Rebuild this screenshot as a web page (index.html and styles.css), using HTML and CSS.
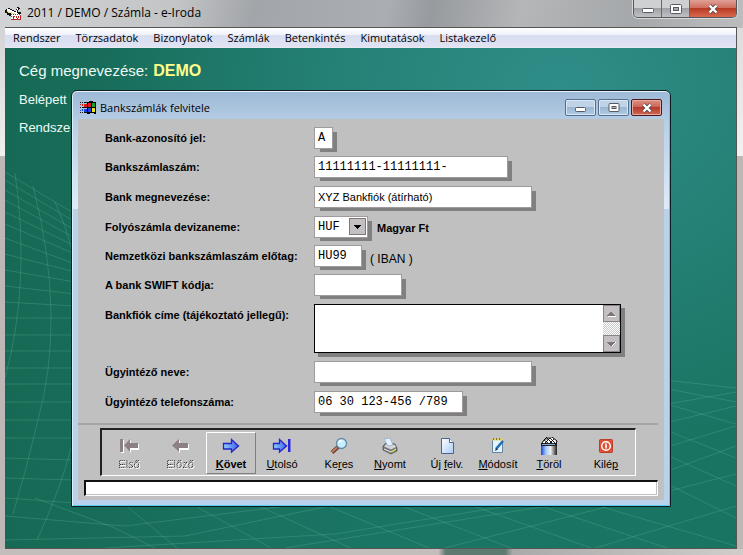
FILE: index.html
```html
<!DOCTYPE html>
<html lang="hu">
<head>
<meta charset="utf-8">
<title>2011 / DEMO / Számla - e-Iroda</title>
<link rel="stylesheet" href="styles.css">
</head>
<body>
<div class="app">
  <header class="app-title">
    <svg class="app-icon" viewBox="0 0 17 16" width="17" height="16" shape-rendering="crispEdges" aria-hidden="true">
      <path d="M1 4h2V3h2v1h2v1h2v1h2V4h1V2h2v1h1v1h-1v1h-1v2h3v8H6v-4H4v-1H2V8H0V5h1z" fill="#111"/>
      <path d="M2 4h3v1h2v1h2v1h2V5h1V3h1v2h-1v3h1v1H7V8H4V7H2z" fill="#fff"/>
      <path d="M2 6h2v1h3v1h3v1H6V8H3z" fill="#eedc9a"/>
      <path d="M6 9h10v6H6z" fill="#fff"/>
      <path d="M6 9h1v1H6zM8 9h1v1H8zM10 9h1v1h-1zM12 9h1v1h-1zM14 9h1v1h-1zM6 14h10v1H6zM6 11h1v1H6zM15 10h1v4h-1zM8 11h2v1H8zM8 12h1v2H8zM11 11h1v2h-1zM13 11h1v2h-1zM12 13h1v1h-1z" fill="#b22"/>
    </svg>
    <h1 class="app-name">2011 / DEMO / Számla - e-Iroda</h1>
    <div class="app-buttons">
      <button class="app-btn" type="button" aria-label="Kis méret"><svg viewBox="0 0 12 10" width="12" height="10"><rect x=".5" y="4.500" width="11" height="4" rx="1" fill="#fff" stroke="#545a66"/></svg></button>
      <button class="app-btn" type="button" aria-label="Teljes méret"><svg viewBox="0 0 12 10" width="12" height="10"><rect x=".5" y=".5" width="11" height="9" rx="1" fill="#fff" stroke="#545a66"/><rect x="3.500" y="3.500" width="5" height="3" fill="#aaa" stroke="#545a66"/></svg></button>
      <button class="app-btn app-btn-close" type="button" aria-label="Bezárás"><svg viewBox="0 0 12 10" width="12" height="10"><path d="M2.500 1.500l7 7M9.500 1.500l-7 7" stroke="#5a4a50" stroke-width="4"/><path d="M2.500 1.500l7 7M9.500 1.500l-7 7" stroke="#fff" stroke-width="2.400"/></svg></button>
    </div>
  </header>
  <div class="app-body">
    <nav class="menu">
      <a href="#">Rendszer</a><a href="#">Törzsadatok</a><a href="#">Bizonylatok</a><a href="#">Számlák</a><a href="#">Betenkintés</a><a href="#">Kimutatások</a><a href="#">Listakezelő</a>
    </nav>
    <main class="desktop">
      <svg class="wallpaper" viewBox="0 0 731 500" preserveAspectRatio="none" aria-hidden="true">
        <g fill="none" stroke="#5fae97" stroke-opacity=".32">
          <path d="M10 125Q26 235 0 330M28 138Q62 270 32 376Q22 420 8 466M50 154Q95 250 66 400Q56 440 32 492M0 124l70 42M0 132l70 42M0 142l70 40M0 152l70 38M0 164l70 34M0 176l70 30M0 190l70 26M0 206l70 18M0 222l70 12M0 238l70 8M0 254l70 4M0 270h70M0 287h70M0 303h70M0 320h70M0 336h70M0 354h70M0 372h70M0 390h70M0 410l70 2M0 430l70 2M0 450l70 5"/>
          <path d="M0 468l120 10L330 452M0 492l180 -4 240-50M100 500l230-14 210-34M280 500l300-48 70-12M440 500l291-74M590 500l141-42M30 450l80 30 40 20M112 450l60 50M176 450l90 50M236 450l110 50M304 450l120 50M376 450l130 50M446 450l140 50M512 450l150 50M566 450l165 48M606 408l125 62M606 382l125 56M606 360l125 50M606 340l125 36M606 330l125 24M606 326l125 14M606 366l125-22M606 388l125-30M606 416l125-38M606 444l125-46"/>
        </g>
      </svg>
      <div class="info">
        <p class="company"><span>Cég megnevezése:</span><strong>DEMO</strong></p>
        <p class="detail">Belépett</p>
        <p class="detail">Rendsze</p>
      </div>

      <section class="dialog" aria-labelledby="dlg-title">
        <header class="dlg-head">
          <svg viewBox="0 0 16 14" width="16" height="14" shape-rendering="crispEdges" aria-hidden="true">
            <path d="M7 1h2V0h4v1h3v12h-2v-1h-4v1H7z" fill="#000"/>
            <path d="M8 2h3v4H8zM4 3h3v3H4z" fill="#e01818"/><path d="M12 2h3v4h-3z" fill="#18a030"/>
            <path d="M8 7h3v4H8zM4 8h3v3H4z" fill="#1840e0"/><path d="M12 7h3v4h-3z" fill="#f0e020"/>
            <path d="M2 3h1v2H2zM0 3h1v1H0z" fill="#d01818"/><path d="M2 8h1v2H2zM0 9h1v1H0z" fill="#1840e0"/>
            <path d="M0 1h1v1H0zM2 1h1v1H2zM4 1h3v1H4zM0 6h1v1H0zM2 6h6v1H2zM0 11h1v1H0zM2 11h1v1H2zM4 11h4v1H4z" fill="#111"/>
          </svg>
          <h2 class="dlg-title" id="dlg-title">Bankszámlák felvitele</h2>
          <div class="dlg-buttons">
            <button class="dlg-btn" type="button" aria-label="Kis méret"><svg viewBox="0 0 12 10" width="12" height="10"><rect x=".5" y="4.500" width="10" height="4" rx="1" fill="#fff" stroke="#545a66"/></svg></button>
            <button class="dlg-btn" type="button" aria-label="Teljes méret"><svg viewBox="0 0 12 10" width="12" height="10"><rect x="1" y=".5" width="10" height="8" rx="1" fill="#fff" stroke="#545a66"/><rect x="4" y="3.500" width="4" height="2" fill="#aaa" stroke="#545a66"/></svg></button>
            <button class="dlg-btn dlg-btn-close" type="button" aria-label="Bezárás"><svg viewBox="0 0 12 10" width="12" height="10"><path d="M2.500 1.500l7 7M9.500 1.500l-7 7" stroke="#5a4a50" stroke-width="4"/><path d="M2.500 1.500l7 7M9.500 1.500l-7 7" stroke="#fff" stroke-width="2.400"/></svg></button>
          </div>
        </header>

        <div class="client">
          <form class="form">
            <label for="f-id">Bank-azonosító jel:</label>
            <div class="cell"><input class="field w-id mono" id="f-id" value="A"></div>
            <label for="f-acc">Bankszámlaszám:</label>
            <div class="cell"><input class="field w-acc mono" id="f-acc" value="11111111-11111111-"></div>
            <label for="f-bank">Bank megnevezése:</label>
            <div class="cell"><input class="field w-name" id="f-bank" value="XYZ Bankfiók (átírható)"></div>
            <label for="f-cur">Folyószámla devizaneme:</label>
            <div class="cell">
              <span class="combo">
                <select class="field w-cur mono" id="f-cur"><option>HUF</option></select>
                <svg class="combo-arrow" viewBox="0 0 17 17" width="17" height="17" shape-rendering="crispEdges" aria-hidden="true"><rect x=".5" y=".5" width="16" height="16" fill="#c3bfc2" stroke="#7d7779"/><path d="M5 7h7v1h-1v1h-1v1H9v1H8v-1H7V9H6V8H5z" fill="#000"/></svg>
              </span>
              <strong class="note">Magyar Ft</strong>
            </div>
            <label for="f-iban">Nemzetközi bankszámlaszám előtag:</label>
            <div class="cell"><input class="field w-iban mono" id="f-iban" value="HU99"><span class="note note-iban">( IBAN )</span></div>
            <label for="f-swift">A bank SWIFT kódja:</label>
            <div class="cell"><input class="field w-swift mono" id="f-swift"></div>
            <label for="f-addr">Bankfiók címe (tájékoztató jellegű):</label>
            <div class="cell">
              <div class="memo">
                <textarea id="f-addr"></textarea>
                <div class="scroll">
                  <button type="button" disabled aria-label="Fel"><svg viewBox="0 0 9 6" width="9" height="6" shape-rendering="crispEdges"><path d="M1 5h8v1H1z" fill="#fff"/><path d="M0 4h8v1H0zM1 3h6v1H1zM2 2h4v1H2zM3 1h2v1H3z" fill="#7d7779"/></svg></button>
                  <button type="button" disabled aria-label="Le"><svg viewBox="0 0 9 6" width="9" height="6" shape-rendering="crispEdges"><path d="M8 1h1v1H8v1H7v1H6v1H4V4h1z" fill="#fff"/><path d="M0 1h8v1H0zM1 2h6v1H1zM2 3h4v1H2zM3 4h2v1H3z" fill="#7d7779"/></svg></button>
                </div>
              </div>
            </div>
            <label for="f-clerk">Ügyintéző neve:</label>
            <div class="cell"><input class="field w-name" id="f-clerk"></div>
            <label for="f-phone">Ügyintéző telefonszáma:</label>
            <div class="cell"><input class="field w-phone mono" id="f-phone" value="06 30 123-456 /789"></div>
          </form>

          <hr class="rule">

          <div class="toolbar">
            <div class="group">
              <button class="tool" type="button" disabled>
                <svg viewBox="0 0 20 18" width="20" height="18"><path d="M2 3h3v13H2zM6 9.500l6-6.500v4h8v6h-8v3z" fill="#fff"/><path d="M1 2h3v13H1zM5 8.500l6-6.500v4h8v5h-8v4z" fill="#8c8084"/></svg>
                <span>Első</span></button>
              <button class="tool" type="button" disabled>
                <svg viewBox="0 0 20 18" width="20" height="18"><path d="M3 9.500l7-6.500v4h9v6h-9v3z" fill="#fff"/><path d="M2 8.500l7-6.500v4h9v5H9v4z" fill="#8c8084"/></svg>
                <span>Előző</span></button>
              <button class="tool tool-active" type="button">
                <svg viewBox="0 0 20 18" width="20" height="18"><defs><linearGradient id="blue"><stop offset="0" stop-color="#8fd0ff"/><stop offset="1" stop-color="#3d62ee"/></linearGradient></defs><path d="M2.500 6.500h8v-4l7 6.500-7 6v-3h-8z" fill="url(#blue)" stroke="#2424c8" stroke-width="1.300"/></svg>
                <span><u>K</u>övet</span></button>
              <button class="tool" type="button">
                <svg viewBox="0 0 20 18" width="20" height="18"><path d="M1.500 6.500h6v-4l7 6.500-7 6v-3h-6z" fill="url(#blue)" stroke="#2424c8" stroke-width="1.300"/><path d="M16 2h2.500v13H16z" fill="#2828d8"/></svg>
                <span><u>U</u>tolsó</span></button>
            </div>
            <div class="group">
              <button class="tool" type="button">
                <svg viewBox="0 0 20 18" width="20" height="18"><path d="M9 10l-6 5.500" stroke="#64413a" stroke-width="4"/><path d="M8 10.500l-5 4.500" stroke="#c27c58" stroke-width="2"/><circle cx="12.500" cy="6.500" r="5" fill="#c7efff" stroke="#6689a6" stroke-width="1.300"/><path d="M9.800 6a3 3 0 0 1 3-2.500" stroke="#fff" stroke-width="1.500" fill="none"/></svg>
                <span>Ke<u>r</u>es</span></button>
              <button class="tool" type="button">
                <svg viewBox="0 0 20 18" width="20" height="18"><path d="M3 9l3-3 9 1 2 4v3l-6 3-8-4z" fill="#77777b" stroke="#555" stroke-width=".8"/><path d="M4 9.500l3-3 8 1.500 1 2-5 2.500z" fill="#d5d5d8"/><path d="M4 2l6-1 3 7-5 1z" fill="#e3f1ff" stroke="#8da6c4" stroke-width=".7"/><path d="M4 12l7 3 5-3" stroke="#eee" fill="none"/><path d="M12 15l3-2" stroke="#c9d63b" stroke-width="1.300"/></svg>
                <span><u>N</u>yomt</span></button>
            </div>
            <div class="group">
              <button class="tool" type="button">
                <svg viewBox="0 0 20 18" width="20" height="18"><defs><linearGradient id="sheet" x2="1" y2="1"><stop offset="0" stop-color="#fff"/><stop offset="1" stop-color="#a9cbf8"/></linearGradient></defs><path d="M4.500 1.500h8l4 4v11h-12z" fill="url(#sheet)" stroke="#48648f"/><path d="M12.500 1.500v4h4" fill="#fff" stroke="#48648f"/></svg>
                <span>Új <u>f</u>elv.</span></button>
              <button class="tool" type="button">
                <svg viewBox="0 0 20 18" width="20" height="18"><path d="M4.500 2.500h10v13h-10z" fill="#e2f4ff" stroke="#6584a4"/><path d="M4 1.500h11v2H4z" fill="#e2d46a"/><path d="M5 1h1v2H5zM8 1h1v2H8zM11 1h1v2h-1z" fill="#766c32"/><path d="M8 12l7-8" stroke="#206eb4" stroke-width="2.600"/><path d="M7 14l1-3 2 1.500z" fill="#234"/></svg>
                <span><u>M</u>ódosít</span></button>
              <button class="tool" type="button">
                <svg viewBox="0 0 20 18" width="20" height="18"><defs><linearGradient id="bin"><stop offset="0" stop-color="#1744d8"/><stop offset=".3" stop-color="#9ec8ff"/><stop offset=".6" stop-color="#eee"/><stop offset="1" stop-color="#222"/></linearGradient></defs><path d="M3 6l2-3 3-3h5l5 4-1 3H3z" fill="#fff" stroke="#000"/><path d="M5 3l4 3M8 1l5 5M11 1l5 5M15 2l-4 4M11 1L6 6M6 2h4" stroke="#000" stroke-width=".9"/><path d="M2 6h16v3H2z" fill="#222"/><path d="M3 7h13v1H3z" fill="#8ad"/><path d="M2 9h16v9H2z" fill="url(#bin)"/></svg>
                <span><u>T</u>öröl</span></button>
            </div>
            <div class="group">
              <button class="tool" type="button">
                <svg viewBox="0 0 20 18" width="20" height="18"><rect x="3.500" y="2.500" width="13" height="13" rx="1" fill="#df5034" stroke="#b93d27"/><circle cx="10" cy="9" r="4.300" fill="none" stroke="#fff" stroke-width="1.500"/><path d="M10 6.500v5" stroke="#fff" stroke-width="1.600"/></svg>
                <span>Kilé<u>p</u></span></button>
            </div>
          </div>

          <div class="status" role="status"></div>
        </div>
      </section>
    </main>
  </div>
</div>
</body>
</html>
```
FILE: styles.css
```css
* { box-sizing: border-box; }

body {
  margin: 0;
  font-family: "Liberation Sans", Arial, sans-serif;
  font-size: 11px;
  color: #000;
}

h1, h2, p { margin: 0; font-weight: normal; }
button, input, select, textarea { font: inherit; color: inherit; margin: 0; }
button svg { display: block; }

/* Main window */
.app {
  display: flex;
  flex-direction: column;
  min-height: 100vh;
  padding: 0 6px 6px 5px;
  background:
    linear-gradient(#dcdcdc, #f2f2f2) right 28px / 6px 128px no-repeat,
    linear-gradient(#d4d4d4, #f0f0f0) left 28px / 5px 128px no-repeat,
    linear-gradient(90deg, #c3bebc 59%, #5d7b70 60%, #5d7b70 68%, #aaa 69%, #d0cdcb) bottom / 100% 6px no-repeat,
    linear-gradient(100deg, #d2d3d4, #c2c4c6 24%, #a2a5a9 34%, #aaadb1 52%, #979a9e 58%, #b4b6b8 70%, #a5a8aa 85%, #bcbdbf) top / 100% 28px no-repeat,
    #bdb8b6;
}

.app-title {
  display: flex;
  align-items: flex-start;
  height: 27px;
  gap: 5px;
}
.app-icon { margin-top: 5px; }
.app-name {
  flex: 1;
  font: 12px/26px "Open Sans", "Noto Sans", sans-serif;
}
.app-buttons {
  display: flex;
  border: 1px solid #55585c;
  border-top: 0;
  border-radius: 0 0 5px 5px;
  box-shadow: 0 0 0 1px #d8d8d8;
  overflow: hidden;
}
.app-btn {
  display: grid;
  place-items: center;
  width: 28px;
  height: 17px;
  padding: 0;
  border: 0;
  border-right: 1px solid #66696d;
  background: linear-gradient(#cfd0d2 45%, #9fa1a5 50%, #bfc1c3);
}
.app-btn-close {
  width: 46px;
  border-right: 0;
  background: linear-gradient(#e0a097, #d0705f 45%, #b93a24 50%, #d8694e);
}

.app-body {
  flex: 1;
  display: flex;
  flex-direction: column;
  border: 1px solid #555;
  border-left: 0;
}

.menu {
  display: flex;
  gap: 15px;
  height: 20px;
  padding-left: 8px;
  background: linear-gradient(#fff, #f0f2fa 35%, #d8ddf0 40%, #dfe3f3);
  border-bottom: 1px solid #e8e8f0;
  font: 11px/19px "Open Sans", "Noto Sans", sans-serif;
}
.menu a { color: #000; text-decoration: none; }

.desktop {
  flex: 1;
  position: relative;
  padding: 14px 14px 42px;
  background:
    radial-gradient(ellipse 460px 360px at 76% 8%, #2f8d88, rgba(47, 141, 136, 0)),
    linear-gradient(90deg, #166a55, #1b7564 50%, #1a7462);
}
.wallpaper {
  position: absolute;
  inset: 0;
  width: 100%;
  height: 100%;
}
.info { position: relative; color: #eefaf5; }
.company { display: flex; gap: 5px; font-size: 15px; line-height: 18px; }
.company strong { font-size: 16px; color: #ffff8a; }
.detail { margin-top: 12px; font-size: 13px; line-height: 16px; }

/* Dialog window */
.dialog {
  position: absolute;
  top: 42px;
  left: 66px;
  right: 65px;
  padding: 0 6px 6px;
  border: 1px solid #0b1c22;
  border-radius: 6px 6px 0 0;
  box-shadow: inset 0 1px #e6f4fc, inset 1px 0 #d8eefa, inset -1px -1px #55d0ee;
  background:
    linear-gradient(#9db9d6, #b4cbe4) top / 100% 28px no-repeat,
    linear-gradient(#b4cee8, #dfecf9) 0 28px / 100% 90px no-repeat,
    #b9d1ea;
}
.dlg-head {
  display: flex;
  align-items: center;
  gap: 4px;
  height: 28px;
  padding: 5px 2px 0;
}
.dlg-title {
  flex: 1;
  font: 11px/18px "Open Sans", "Noto Sans", sans-serif;
}
.dlg-buttons { display: flex; gap: 2px; }
.dlg-btn {
  display: grid;
  place-items: center;
  width: 31px;
  height: 17px;
  padding: 0;
  border: 1px solid #54708e;
  border-radius: 2px;
  box-shadow: inset 0 0 0 1px #d8e7f5;
  background: linear-gradient(#bfd2e6 45%, #9bb6d2 50%, #b2cce4);
}
.dlg-btn-close {
  border-color: #4a1820;
  box-shadow: inset 0 0 0 1px #e8a89e;
  background: linear-gradient(#dc9085, #cc6758 45%, #b43a2a 50%, #cf6a50);
}

.client { padding: 8px 6px 4px; background: #c0c0c0; }

.form {
  display: grid;
  grid-template-columns: 209px 1fr;
  grid-template-rows: 29px 30px 30px 29px 29px 30px 57px 30px 22px;
  padding-left: 21px;
}
.form label { font-weight: bold; line-height: 22px; white-space: nowrap; }
.cell { display: flex; align-items: flex-start; }

.field {
  height: 22px;
  padding: 0 3px 1px;
  border: 1px solid #a09a9c;
  border-radius: 0;
  outline: 0;
  background: #fff;
  box-shadow: 5px 4px 0 -1px #808080;
}
.mono { padding-bottom: 0; font-family: "Liberation Mono", "Courier New", monospace; font-size: 12px; }
.w-id { width: 19px; }
.w-acc { width: 194px; }
.w-name { width: 218px; }
.w-cur { width: 54px; appearance: none; }
.w-iban { width: 48px; }
.w-swift { width: 88px; }
.w-phone { width: 149px; }

.combo { position: relative; }
.combo-arrow { position: absolute; top: 2px; right: 2px; pointer-events: none; }
.note { margin-left: 9px; line-height: 24px; }
.note-iban { margin-left: 8px; font-size: 12px; line-height: 28px; }

.memo {
  display: flex;
  width: 307px;
  height: 49px;
  border: 1px solid #000;
  background: #fff;
  box-shadow: 4px 4px 0 #808080;
}
.memo textarea { flex: 1; min-width: 0; padding: 2px; border: 0; outline: 0; resize: none; }
.scroll {
  display: flex;
  flex-direction: column;
  justify-content: space-between;
  width: 17px;
  background: repeating-conic-gradient(#c8c8c8 0 25%, #fff 0 50%) 0 0 / 2px 2px;
}
.scroll button {
  display: grid;
  place-items: center;
  width: 17px;
  height: 17px;
  padding: 0;
  border: 1px solid #8a8486;
  background: #c3bfc2;
}

.rule { height: 2px; margin: 10px 0 3px -6px; border: 0; background: #a9a3a4; }

.toolbar {
  display: flex;
  gap: 7px;
  margin: 0 22px 0 16px;
  padding: 2px 2px 1px;
  border: 2px solid #fff;
  border-top-color: #222;
  border-left-color: #222;
  border-width: 2px 1px 1px 2px;
  background: #c3c3c3;
}
.group { display: flex; gap: 1px; }
.tool {
  display: flex;
  flex-direction: column;
  align-items: center;
  gap: 2px;
  width: 50px;
  height: 42px;
  padding: 4px 0 0;
  border: 1px solid transparent;
  background: none;
  line-height: 14px;
  white-space: nowrap;
}
.tool:disabled span {
  color: transparent;
  background: repeating-conic-gradient(#333 0 25%, #999 0 50%) 0 0 / 2px 2px;
  background-clip: text;
  -webkit-background-clip: text;
  filter: drop-shadow(1px 1px #fff);
}
.tool-active {
  border-color: #fff #808080 #808080 #fff;
  font-weight: bold;
}

.status {
  height: 16px;
  margin-top: 4px;
  border: 1px solid #fff;
  border-top: 2px solid #111;
  border-left: 2px solid #111;
  background: #fff;
  box-shadow: inset -1px -1px #c0c0c0;
}
```
